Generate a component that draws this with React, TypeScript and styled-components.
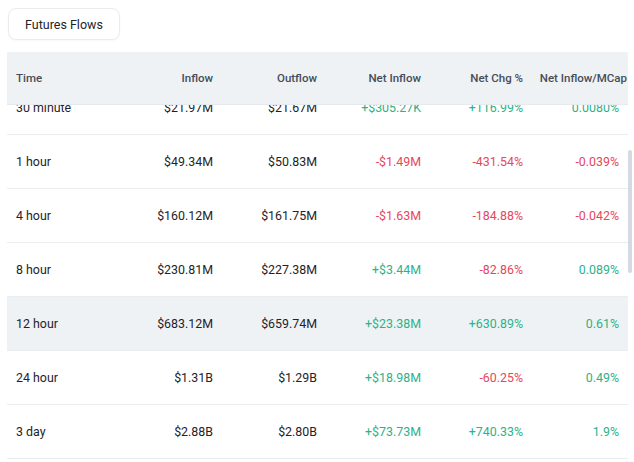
import { useLayoutEffect, useRef } from 'react';
import styled, { createGlobalStyle } from 'styled-components';

const GlobalStyle = createGlobalStyle`
    body {
        margin: 0;
        background: #ffffff;
        font-family: Roboto, "Liberation Sans", sans-serif;
        color: #1e2329;
    }
`;

// page frame: button on top, scrolling table below
const Page = styled.div`
    height: 462px;
    padding: 8px 2px 0 7px;
    box-sizing: border-box;
    overflow: hidden;
    display: flex;
    flex-direction: column;
    align-items: flex-start;
    gap: 12px;
`;

const TabButton = styled.button`
    margin-left: 1px;
    height: 32px;
    padding: 0 16px;
    border: 1px solid #eaecef;
    border-radius: 8px;
    background: #ffffff;
    font-family: Roboto, "Liberation Sans", sans-serif;
    font-size: 12.5px;
    color: #1e2329;
    box-shadow: 0 1px 2px rgba(0, 0, 0, 0.03);
`;

const TableFrame = styled.div`
    position: relative;
    width: 625px;
    height: 410px;
`;

const TableScroll = styled.div`
    width: 100%;
    height: 100%;
    overflow-y: auto;
    scrollbar-width: none;

    &::-webkit-scrollbar {
        display: none;
    }
`;

// thin custom scroll thumb that sits over the right edge
const ScrollThumb = styled.div`
    position: absolute;
    top: 98px;
    left: 621px;
    width: 4px;
    height: 123px;
    border-radius: 2px;
    background: #d5d9e2;
`;

const Grid = styled.div`
    width: 621px;
    padding-bottom: 4px;
`;

const Row = styled.div<{ $head?: boolean; $highlight?: boolean }>`
    display: grid;
    grid-template-columns: 111px 104px 104px 104px 102px 96px;
    align-items: center;
    height: ${(p) => (p.$head ? '53px' : '54px')};
    box-sizing: border-box;
    background: ${(p) => (p.$head || p.$highlight ? '#eff2f5' : '#ffffff')};
    border-bottom: 1px solid ${(p) => (p.$head ? '#e6e9ed' : '#eaecef')};
    ${(p) =>
        p.$head &&
        `
        position: sticky;
        top: 0;
        z-index: 1;
    `}
`;

const HeadCell = styled.div<{ $left?: boolean; $last?: boolean }>`
    padding: ${(p) => (p.$last ? '0 1px 0 0' : '0 9px')};
    text-align: ${(p) => (p.$left ? 'left' : 'right')};
    font-size: 11.5px;
    font-weight: 500;
    color: #474d57;
    white-space: nowrap;
`;

type Tone = 'up' | 'down' | undefined;

const Cell = styled.div<{ $left?: boolean; $tone?: Tone }>`
    padding: 0 9px;
    text-align: ${(p) => (p.$left ? 'left' : 'right')};
    font-size: 12.4px;
    white-space: nowrap;
    color: ${(p) =>
        p.$tone === 'up' ? '#2bb28a' : p.$tone === 'down' ? '#e5475b' : '#1e2329'};
`;

const columns = ['Inflow', 'Outflow', 'Net Inflow', 'Net Chg %', 'Net Inflow/MCap'];

const rows = [
    ['30 minute', '$21.97M', '$21.67M', '+$305.27K', '+116.99%', '0.0080%'],
    ['1 hour', '$49.34M', '$50.83M', '-$1.49M', '-431.54%', '-0.039%'],
    ['4 hour', '$160.12M', '$161.75M', '-$1.63M', '-184.88%', '-0.042%'],
    ['8 hour', '$230.81M', '$227.38M', '+$3.44M', '-82.86%', '0.089%'],
    ['12 hour', '$683.12M', '$659.74M', '+$23.38M', '+630.89%', '0.61%'],
    ['24 hour', '$1.31B', '$1.29B', '+$18.98M', '-60.25%', '0.49%'],
    ['3 day', '$2.88B', '$2.80B', '+$73.73M', '+740.33%', '1.9%'],
];

// sign of the value decides the colour
const toneOf = (value: string): Tone => (value.startsWith('-') ? 'down' : 'up');

function App() {
    const scrollRef = useRef<HTMLDivElement>(null);

    useLayoutEffect(() => {
        if (scrollRef.current) scrollRef.current.scrollTop = 24;
    }, []);

    return (
        <>
            <GlobalStyle />
            <Page>
                <TabButton>Futures Flows</TabButton>
                <TableFrame>
                    <TableScroll ref={scrollRef}>
                        <Grid>
                            <Row $head>
                                <HeadCell $left>Time</HeadCell>
                                {columns.map((c, i) => (
                                    <HeadCell key={c} $last={i === columns.length - 1}>
                                        {c}
                                    </HeadCell>
                                ))}
                            </Row>
                            {rows.map(([time, inflow, outflow, net, chg, mcap]) => (
                                <Row key={time} $highlight={time === '12 hour'}>
                                    <Cell $left>{time}</Cell>
                                    <Cell>{inflow}</Cell>
                                    <Cell>{outflow}</Cell>
                                    <Cell $tone={toneOf(net)}>{net}</Cell>
                                    <Cell $tone={toneOf(chg)}>{chg}</Cell>
                                    <Cell $tone={toneOf(mcap)}>{mcap}</Cell>
                                </Row>
                            ))}
                        </Grid>
                    </TableScroll>
                    <ScrollThumb />
                </TableFrame>
            </Page>
        </>
    );
}

export default App;
